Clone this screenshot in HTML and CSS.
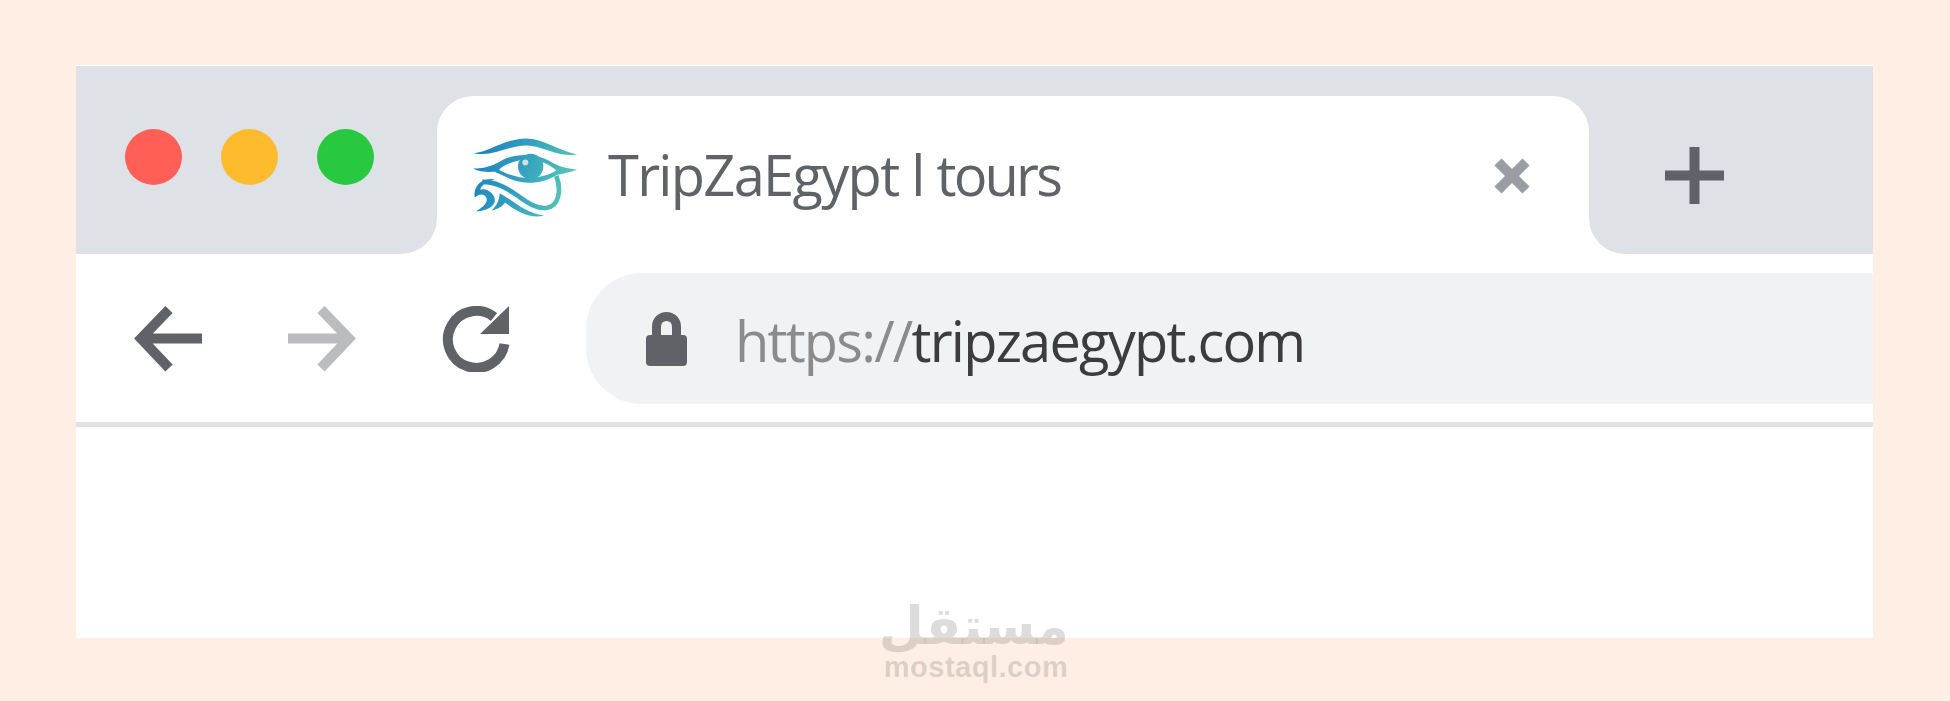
FILE: index.html
```html
<!DOCTYPE html>
<html lang="en">
<head>
<meta charset="utf-8">
<title>TripZaEgypt | tours</title>
<link rel="stylesheet" href="styles.css">
</head>
<body>
<div class="window">
  <div class="strip">
    <div class="controls">
      <span class="dot red"></span><span class="dot yellow"></span><span class="dot green"></span>
    </div>
    <div class="tab-slot">
      <div class="tab">
        <svg class="logo" viewBox="100 140 315 245">
          <defs>
            <linearGradient id="eye" gradientUnits="userSpaceOnUse" x1="100" y1="200" x2="410" y2="300">
              <stop offset="0" stop-color="#1a7fc1"/><stop offset="0.5" stop-color="#35a3bf"/><stop offset="1" stop-color="#5bcbb8"/>
            </linearGradient>
          </defs>
          <path fill="url(#eye)" d="M102 188C150 184 190 146 260 144C310 144 360 182 412 192C360 202 310 166 260 165C200 166 160 200 102 188Z"/>
          <path fill="url(#eye)" fill-rule="evenodd" d="M100 234C140 236 165 222 190 208C240 184 300 190 345 220C365 232 390 234 412 238C385 248 365 250 350 254C320 272 280 282 240 274C215 268 190 256 165 244C145 244 120 246 100 234ZM178 238C198 250 220 256 240 260C285 266 325 256 350 240C335 226 315 214 285 209C240 204 198 218 178 238Z"/>
          <circle cx="273" cy="228" r="38" fill="url(#eye)"/>
          <circle cx="257" cy="216" r="9" fill="#d3dde2"/>
          <path fill="none" stroke="url(#eye)" stroke-width="14" d="M350 256C366 300 358 345 322 352C292 356 265 338 235 316C200 292 170 274 128 274"/>
          <path fill="url(#eye)" d="M105 322C100 286 125 262 165 266C135 276 122 288 122 298C136 292 156 302 164 320C172 342 150 360 108 363C132 350 146 335 140 322C134 310 120 308 105 322Z"/>
          <path fill="url(#eye)" d="M155 360C172 345 180 325 180 308C215 326 255 368 314 375C270 388 225 358 196 336C188 348 175 356 155 360Z"/>
        </svg>
        <span class="title">TripZaEgypt l <span class="tight">tours</span></span>
        <svg class="close" viewBox="0 0 38 38"><path d="M5 5L33 33M33 5L5 33"/></svg>
      </div>
    </div>
    <div class="new-tab">
      <svg class="plus" viewBox="0 0 59 57"><path d="M29.500 0V57M0 28.500H59"/></svg>
    </div>
  </div>
  <div class="toolbar">
    <svg class="nav" viewBox="0 0 68 66"><path class="arrow" d="M68 32.500H10M35 3.500L7 32.500L35 62"/></svg>
    <svg class="nav nav-off" viewBox="0 0 68 66"><path class="arrow" d="M0 32.500H58M33 3.500L61 32.500L33 62"/></svg>
    <svg class="nav" viewBox="0 0 68 66">
      <path class="ring" d="M52 11A28.500 28.500 0 1 0 62.500 38"/>
      <path class="head" d="M67 0V28H38Z"/>
    </svg>
    <div class="address">
      <svg class="lock" viewBox="0 0 41 54">
        <path class="shackle" d="M10.500 28V15C10.500 1 30.500 1 30.500 15V28"/>
        <rect class="body" x="0" y="23" width="41" height="31" rx="4"/>
      </svg>
      <span class="url"><span class="scheme">https://</span>tripzaegypt.com</span>
    </div>
  </div>
  <div class="divider"></div>
</div>
<div class="mark">
  <div class="mark-ar" lang="ar" dir="rtl">مستقل</div>
  <div class="mark-en">mostaql.com</div>
</div>
</body>
</html>
```

FILE: styles.css
```css
* { box-sizing: border-box; }
html, body { margin: 0; height: 701px; overflow: hidden; }
body {
  background: #ffeee3;
  padding: 65px 77px 0 76px;
  position: relative;
  font-family: "Open Sans", sans-serif;
}
.window {
  height: 573px;
  background: #fff;
  border-top: 1px solid #fff;
}
.strip { display: flex; height: 188px; }
.controls {
  width: 361px;
  background: #dee1e6;
  border-bottom-right-radius: 36px;
  display: flex;
  gap: 39px;
  padding: 63px 0 0 49px;
}
.dot { width: 57px; height: 56px; border-radius: 50%; }
.red { background: #ff5f57; }
.yellow { background: #ffbb2e; }
.green { background: #28c940; }
.tab-slot { width: 1152px; background: #dee1e6; padding-top: 30px; }
.tab {
  height: 158px;
  background: #fff;
  border-radius: 36px 36px 0 0;
  display: flex;
  align-items: flex-start;
  padding: 41px 0 0 36px;
}
.logo { width: 105px; height: 82px; flex: none; }
.title {
  font-size: 56px;
  line-height: 76px;
  letter-spacing: -1.7px;
  color: #5f6368;
  margin-left: 30px;
  margin-top: -1px;
  white-space: nowrap;
}
.tight { letter-spacing: -2.8px; }
.close {
  width: 38px; height: 38px; flex: none;
  margin-left: auto; margin-right: 58px; margin-top: 20px;
}
.close path { stroke: #9a9ea3; stroke-width: 10; fill: none; }
.new-tab {
  flex: 1;
  background: #dee1e6;
  border-bottom-left-radius: 36px;
  padding: 81px 0 0 76px;
}
.plus { width: 59px; height: 57px; display: block; }
.plus path { stroke: #5f6368; stroke-width: 10; fill: none; }
.toolbar {
  display: flex;
  align-items: center;
  height: 131px;
  margin-top: 19px;
  padding-left: 58px;
  gap: 86px;
}
.nav { width: 68px; height: 66px; flex: none; color: #5f6368; }
.nav-off { color: #bbbcbd; }
.arrow { fill: none; stroke: currentColor; stroke-width: 10; stroke-miterlimit: 10; }
.ring { fill: none; stroke: currentColor; stroke-width: 10; }
.head { fill: currentColor; }
.address {
  flex: 1;
  height: 131px;
  margin-left: -10px;
  background: #f1f2f4;
  border-radius: 56px 0 0 56px;
  display: flex;
  align-items: center;
  padding-left: 60px;
  gap: 48px;
}
.lock { width: 41px; height: 54px; flex: none; }
.shackle { fill: none; stroke: #5f6368; stroke-width: 9; }
.body { fill: #5f6368; }
.url { font-size: 56px; line-height: 76px; letter-spacing: -1.8px; color: #3c3c40; white-space: nowrap; padding-top: 3px; }
.scheme { color: #8b8b8b; }
.divider { height: 5px; margin-top: 18px; background: #e1e2e8; }
.mark {
  position: absolute;
  left: 883px;
  top: 598px;
  width: 186px;
  text-align: center;
  color: rgba(130, 130, 130, 0.28);
}
.mark-ar { font: bold 52px/56px "DejaVu Sans", sans-serif; height: 54px; }
.mark-en { font: bold 29px/30px "Liberation Sans", sans-serif; letter-spacing: 0.5px; }
```
